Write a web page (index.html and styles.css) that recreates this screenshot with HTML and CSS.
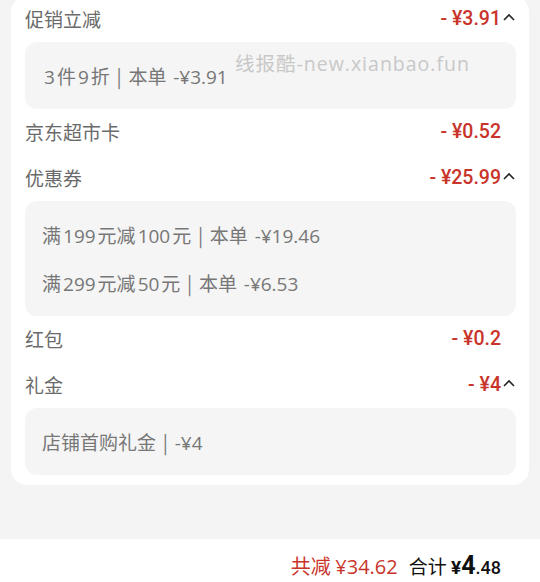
FILE: index.html
```html
<!DOCTYPE html>
<html lang="zh">
<head>
<meta charset="utf-8">
<link rel="stylesheet" href="styles.css">
</head>
<body>
<div class="page">
  <div class="card">
    <div class="row">
      <span class="label">促销立减</span>
      <span class="amount">- ¥3.91<svg class="caret" viewBox="0 0 14 10" width="14" height="10"><polyline points="2,8 7,3 12,8" fill="none" stroke="#222" stroke-width="1.6"/></svg></span>
    </div>
    <div class="detail">
      <div class="line"><span class="n">3</span>件<span class="n">9</span>折 | 本单 <span class="m">-¥3.91</span></div>
    </div>
    <div class="row">
      <span class="label">京东超市卡</span>
      <span class="amount plain">- ¥0.52</span>
    </div>
    <div class="row">
      <span class="label">优惠券</span>
      <span class="amount">- ¥25.99<svg class="caret" viewBox="0 0 14 10" width="14" height="10"><polyline points="2,8 7,3 12,8" fill="none" stroke="#222" stroke-width="1.6"/></svg></span>
    </div>
    <div class="detail">
      <div class="line">满<span class="n">199</span>元减<span class="n">100</span>元 | 本单 <span class="m">-¥19.46</span></div>
      <div class="line">满<span class="n">299</span>元减<span class="n">50</span>元 | 本单 <span class="m">-¥6.53</span></div>
    </div>
    <div class="row">
      <span class="label">红包</span>
      <span class="amount plain">- ¥0.2</span>
    </div>
    <div class="row">
      <span class="label">礼金</span>
      <span class="amount">- ¥4<svg class="caret" viewBox="0 0 14 10" width="14" height="10"><polyline points="2,8 7,3 12,8" fill="none" stroke="#222" stroke-width="1.6"/></svg></span>
    </div>
    <div class="detail">
      <div class="line">店铺首购礼金 | <span class="m">-¥4</span></div>
    </div>
  </div>
  <div class="spacer"></div>
  <div class="footer">
    <span class="saved">共减 <span class="sv">¥34.62</span></span>
    <span class="total">合计 <b class="yen">¥</b><b class="int">4</b><b class="dec">.48</b></span>
  </div>
  <div class="watermark">线报酷-new.xianbao.fun</div>
</div>
</body>
</html>
```

FILE: styles.css
```css
html, body {
  margin: 0;
  padding: 0;
}
body {
  background: #f4f4f4;
  font-family: "Noto Sans CJK SC", "Noto Sans", sans-serif;
  width: 540px;
  height: 582px;
  overflow: hidden;
}
.page {
  position: relative;
  display: flex;
  flex-direction: column;
}
.card {
  margin: -4px 11px 0 11px;
  background: #ffffff;
  border-radius: 16px;
  padding: 0 13px 10px 14px;
}
.row {
  height: 46px;
  display: flex;
  justify-content: space-between;
  align-items: center;
}
.label {
  font-size: 19px;
  color: #6a6a6a;
  margin-top: -2px;
}
.amount {
  display: flex;
  align-items: center;
  font-family: Roboto, "Noto Sans", sans-serif;
  font-weight: 500;
  font-size: 19.5px;
  color: #c9342a;
  margin-top: -1px;
}
.amount.plain {
  padding-right: 15px;
}
.caret {
  margin-left: 1px;
  margin-top: -4px;
}
.detail {
  background: #f5f5f5;
  border-radius: 12px;
  padding: 9.5px 17px;
}
.line {
  height: 48px;
  line-height: 48px;
  font-size: 19px;
  color: #777;
  word-spacing: 2.5px;
  font-family: "Noto Sans CJK SC", sans-serif;
}
.line .n {
  font-family: "Open Sans", sans-serif;
  margin: 0 2px;
}
.line .m {
  font-family: "Open Sans", sans-serif;
}
.spacer {
  height: 54px;
}
.footer {
  box-sizing: border-box;
  height: 45px;
  padding-top: 8px;
  background: #ffffff;
  display: flex;
  justify-content: flex-end;
  align-items: center;
  padding-right: 39px;
  gap: 11px;
}
.saved {
  font-size: 20px;
  color: #c9342a;
}
.sv {
  font-family: "Open Sans", sans-serif;
}
.total {
  font-size: 19px;
  color: #111;
}
.total b {
  font-family: Roboto, sans-serif;
  font-weight: 700;
}
.yen { font-size: 19px; }
.int { font-size: 25px; }
.dec { font-size: 18px; font-weight: 500 !important; }
.watermark {
  position: absolute;
  left: 235px;
  top: 48px;
  font-size: 19.5px;
  letter-spacing: 1px;
  color: #c8c8c8;
  font-family: "Open Sans", "Noto Sans CJK SC", sans-serif;
}
```
